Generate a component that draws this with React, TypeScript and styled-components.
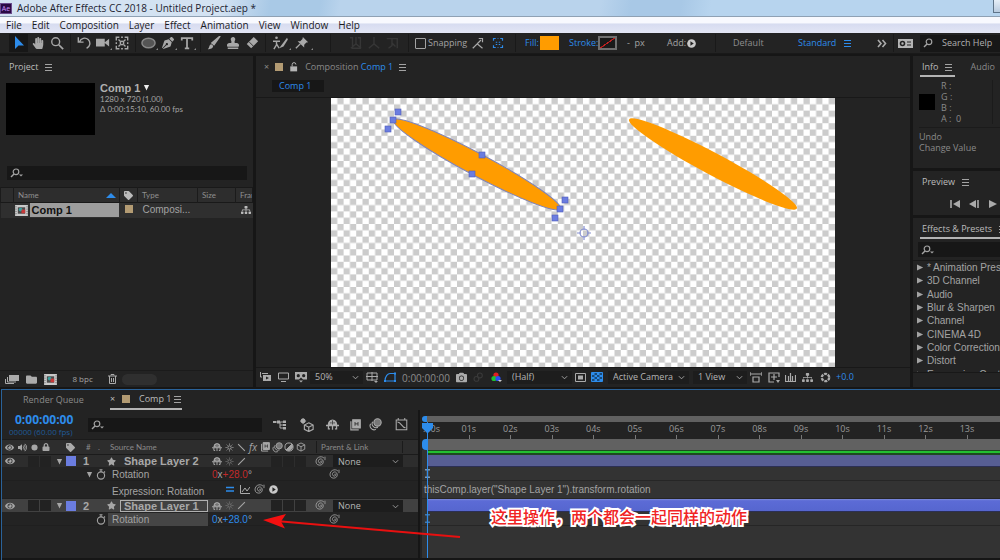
import React from "react";
import styled, { createGlobalStyle, css } from "styled-components";
import {
  FaCamera,
  FaEye,
  FaFolder,
  FaHandPaper,
  FaLock,
  FaPenNib,
  FaSitemap,
  FaStamp,
  FaStar,
  FaTag,
  FaVolumeUp,
} from "react-icons/fa";

const ui = `"Open Sans", "Noto Sans", sans-serif`;
const fine = `Lato, "Open Sans", sans-serif`;
const sans = `"Liberation Sans", Arial, sans-serif`;
const BLUE = "#2d8ceb";
const ORANGE = "#ff9c00";
const TAN = "#b39b73";
const PERI = "#6b7de0";

const Global = createGlobalStyle`
  * { box-sizing: border-box; }
  body { margin: 0; background: #161616; font: 9px/12px ${ui}; color: #a3a3a3; overflow: hidden; }
  button, select, input { font: inherit; color: inherit; border: 0; margin: 0; padding: 0; background: none; border-radius: 0; outline: 0; }
  button { display: inline-flex; align-items: center; justify-content: center; }
  svg { display: block; flex: none; }
  h2, p, ul { margin: 0; padding: 0; font: inherit; list-style: none; }
  a { color: inherit; text-decoration: none; }
`;

const App_ = styled.main`
  display: flex;
  flex-direction: column;
  min-height: 100vh;
`;

/* ---------- window chrome ---------- */
const TitleBar = styled.header`
  display: flex;
  align-items: center;
  gap: 5px;
  height: 17px;
  color: #1c2230;
  font-size: 10px;
  border-bottom: 1px solid #8fa1b4;
  background: linear-gradient(100deg, #d3e2f2 0 22%, #a9c9e6 27% 32%, #b9d3ec 34% 60%, #a8c8e6 63% 68%, #b7d4ee 71%);
`;
const Logo = styled.span`
  display: grid;
  place-items: center;
  width: 12px;
  height: 11px;
  background: #2a0a44;
  border: 1px solid #6b4b8c;
  color: #cf96fd;
  font-size: 7px;
  line-height: 9px;
`;
const WindowControl = styled.button`
  align-self: flex-start;
  margin-left: auto;
  width: 7px;
  height: 13px;
  border: 1px solid #5f7489;
  border-width: 0 0 1px 1px;
  background: linear-gradient(#e6eef7, #b9cbdf);
`;
const MenuBar = styled.nav`
  display: flex;
  align-items: center;
  gap: 10px;
  height: 16px;
  padding: 0 6px;
  background: linear-gradient(#f8f9fe 0 35%, #d7dcf0 45%, #e3e6f5);
  color: #1b1b1f;
  font-size: 10px;
`;

/* ---------- toolbar ---------- */
const Toolbar = styled.div`
  display: flex;
  align-items: center;
  height: 21px;
  padding-left: 9px;
  background: #232323;
  border-bottom: 1px solid #191919;
`;
const Tool = styled.button<{ $w?: number; $active?: boolean; $dim?: boolean }>`
  position: relative;
  width: ${(p) => p.$w ?? 19}px;
  height: 18px;
  flex: none;
  color: ${(p) => (p.$active ? BLUE : p.$dim ? "#363636" : "#a8a8a8")};
  background: ${(p) => (p.$active ? "#171717" : "none")};
`;
const Corner = styled.i`
  position: absolute;
  right: 0;
  bottom: 2px;
  border: 1px solid #8a8a8a;
  border-top-color: transparent;
  border-left-color: transparent;
`;
const Sep = styled.span<{ $w?: number }>`
  flex: none;
  width: ${(p) => p.$w ?? 8}px;
  height: 18px;
  background: linear-gradient(#191919, #191919) center / 1px 100% no-repeat;
`;
const Check = styled.label`
  display: flex;
  align-items: center;
  gap: 2px;
  width: 50px;
  flex: none;
  input {
    appearance: none;
    flex: none;
    width: 11px;
    height: 11px;
    border: 1px solid #a3a3a3;
    border-radius: 1px;
  }
`;
const Label = styled.span<{ $w: number; $blue?: boolean }>`
  width: ${(p) => p.$w}px;
  flex: none;
  white-space: nowrap;
  color: ${(p) => (p.$blue ? BLUE : "inherit")};
`;
const TextButton = styled.button<{ $w: number; $blue?: boolean }>`
  width: ${(p) => p.$w}px;
  flex: none;
  justify-content: flex-start;
  white-space: nowrap;
  color: ${(p) => (p.$blue ? BLUE : "#8f8f8f")};
`;
const Swatch = styled.button<{ $none?: boolean }>`
  width: 19px;
  height: 14px;
  margin-right: 10px;
  flex: none;
  ${(p) =>
    p.$none
      ? css`
          border: 2px solid #707070;
          background: linear-gradient(145deg, #1a1a1a 46%, #c02020 47% 53%, #1a1a1a 54%);
        `
      : css`
          background: ${ORANGE};
        `}
`;
const Right = styled.div`
  display: flex;
  align-items: center;
  margin-left: auto;
`;
const HelpSearch = styled.label`
  display: flex;
  align-items: center;
  gap: 5px;
  width: 80px;
  height: 17px;
  padding-left: 3px;
  margin-left: 8px;
  background: #171717;
  input { width: 56px; }
  input::placeholder { color: #b0b0b0; opacity: 1; }
`;

/* ---------- panels ---------- */
const Workspace = styled.div`
  display: grid;
  grid-template-columns: 253px minmax(0, 1fr) 87px;
  gap: 3px;
  height: 333px;
  padding-top: 2px;
`;
const Panel = styled.section`
  display: flex;
  flex-direction: column;
  min-width: 0;
  overflow: hidden;
  background: #232323;
`;
const PanelTab = styled.h2<{ $line?: boolean }>`
  display: flex;
  align-items: center;
  flex: none;
  gap: 7px;
  height: 21px;
  padding: 3px 2px 0;
  margin-left: 7px;
  align-self: flex-start;
  white-space: nowrap;
  color: #bcbcbc;
  border-bottom: ${(p) => (p.$line ? "2px solid #b4b4b4" : "2px solid transparent")};
`;
const Summary = styled.div`
  display: flex;
  gap: 5px;
  padding: 6px 5px 0 6px;
  line-height: 10px;
`;
const Thumb = styled.div`
  width: 89px;
  height: 52px;
  background: #000;
`;
const CompTitle = styled.button`
  gap: 3px;
  height: 9px;
  font: bold 11px/10px ${sans};
  color: #b0b0b0;
`;
const Small = styled.p`
  font: 8px/10px ${fine};
`;
const SearchBox = styled.label<{ $h?: number }>`
  display: flex;
  align-items: center;
  height: ${(p) => p.$h ?? 14}px;
  padding-left: 3px;
  background: #171717;
  input { flex: 1; min-width: 0; }
`;
const ProjectTable = styled.table`
  width: 100%;
  margin-top: 7px;
  table-layout: fixed;
  border-collapse: collapse;
  font: 8px/12px ${fine};
  text-align: left;
  white-space: nowrap;
  th, td { padding: 0; height: 15px; font-weight: normal; overflow: hidden; }
  thead tr { background: #2d2d2d; border: 1px solid #191919; }
  th { border-left: 1px solid #1b1b1b; padding-left: 4px; color: #8f8f8f; }
  tbody tr { background: #2f2f2f; }
  td { padding-left: 5px; font-family: ${sans}; font-size: 10px; }
`;
const NameHead = styled.span`
  display: flex;
  align-items: center;
  justify-content: space-between;
  padding-right: 3px;
`;
const ItemName = styled.div`
  display: flex;
  align-items: center;
  gap: 2px;
  margin: 0 1px 0 -4px;
  color: #111;
  font: bold 11px/14px ${sans};
  b { flex: 1; padding-left: 2px; background: #9d9d9d; }
`;
const Chip = styled.i<{ $c: string; $s?: number }>`
  display: inline-block;
  flex: none;
  width: ${(p) => p.$s ?? 8}px;
  height: ${(p) => p.$s ?? 8}px;
  background: ${(p) => p.$c};
`;
const ProjectFooter = styled.footer`
  display: flex;
  align-items: center;
  height: 17px;
  margin-top: auto;
  padding-left: 2px;
  border-top: 1px solid #1b1b1b;
  font-size: 8px;
`;
const Pill = styled.span`
  width: 35px;
  height: 11px;
  margin-left: 3px;
  border-radius: 6px;
  background: #2f2f2f;
`;

/* ---------- composition viewer ---------- */
const ViewerTabs = styled.div`
  display: flex;
  align-items: center;
  gap: 6px;
  height: 21px;
  padding-left: 8px;
  color: #8a8a8a;
`;
const Crumb = styled.button`
  align-self: flex-start;
  justify-content: flex-start;
  width: 52px;
  height: 12px;
  margin: 3px 0 0 16px;
  padding-left: 7px;
  background: #171717;
  color: ${BLUE};
`;
const Stage = styled.div`
  display: flex;
  justify-content: center;
  margin-top: 5px;
  border: 1px solid #181818;
  border-width: 1px 0;
`;
const ViewerFooter = styled.footer`
  display: flex;
  align-items: center;
  height: 18px;
  color: #b0b0b0;
`;
const IconButton = styled.button<{ $w?: number; $c?: string }>`
  flex: none;
  width: ${(p) => p.$w ?? 18}px;
  height: 14px;
  color: ${(p) => p.$c ?? "#ababab"};
`;
const SelectWrap = styled.span<{ $w: number }>`
  display: inline-grid;
  flex: none;
  align-items: center;
  width: ${(p) => p.$w}px;
  height: 13px;
  background: #1d1d1d;
  > * { grid-area: 1 / 1; }
  > svg { justify-self: end; margin-right: 4px; pointer-events: none; }
  select { appearance: none; width: 100%; height: 13px; padding-left: 5px; color: #b5b5b5; }
`;
const Timecode = styled.button`
  flex: none;
  width: 54px;
  color: #8c8c8c;
  font: 10px/12px ${ui};
  padding-top: 2px;
`;

/* ---------- right column ---------- */
const SidePanels = styled.div`
  display: flex;
  flex-direction: column;
  gap: 3px;
  min-width: 0;
`;
const TabRow = styled.div`
  display: flex;
  gap: 15px;
  white-space: nowrap;
  color: #8a8a8a;
  align-items: center;
`;
const InfoBody = styled.div`
  display: flex;
  align-items: center;
  gap: 6px;
  height: 51px;
  margin: 0 0 3px 6px;
  border-bottom: 1px solid #1b1b1b;
  dl { display: grid; grid-template-columns: 15px 20px; margin: 0 7px 0 0; line-height: 11px; color: #8a8a8a; flex: 1; border-right: 1px solid #1b1b1b; }
  dd { margin: 0; }
`;
const Log = styled.p`
  padding-left: 6px;
  line-height: 11px;
  color: #8a8a8a;
`;
const Transport = styled.div`
  display: flex;
  align-items: center;
  gap: 2px;
  padding-left: 34px;
  height: 23px;
`;
const EffectsClip = styled.div`
  height: 113px;
  margin-top: 3px;
  overflow: hidden;
  border: 1px solid #181818;
  border-width: 1px 0;
`;
const EffectsList = styled.ul`
  display: grid;
  grid-template-rows: repeat(9, 1fr);
  height: 120px;
  padding-left: 4px;
  font: 10px/13px ${sans};
  white-space: nowrap;
  li { display: flex; align-items: center; gap: 3px; }
`;

/* ---------- timeline ---------- */
const Timeline = styled.section`
  position: relative;
  flex: 1;
  display: flex;
  flex-direction: column;
  margin: 2px 0 0 1px;
  border: 1px solid #2a6299;
  border-width: 1px 0 0 1px;
  background: #232323;
`;
const TimelineTabs = styled.div`
  display: flex;
  align-items: center;
  height: 20px;
  padding-left: 21px;
  color: #8a8a8a;
`;
const ActiveTab = styled.span`
  display: flex;
  align-items: center;
  height: 19px;
  width: 72px;
  border-bottom: 2px solid #b4b4b4;
  color: #bcbcbc;
`;
const Split = styled.div`
  flex: 1;
  display: grid;
  grid-template-columns: 418px minmax(0, 1fr);
  border-bottom: 2px solid #161616;
`;
const Outline = styled.div`
  display: flex;
  flex-direction: column;
  border-right: 2px solid #161616;
`;
const Controls = styled.div`
  display: flex;
  align-items: center;
  height: 29px;
  padding-left: 7px;
`;
const CurrentTime = styled.div`
  width: 79px;
  flex: none;
  white-space: nowrap;
  button { display: block; margin-left: 6px; color: ${BLUE}; font: bold 12px/14px ${ui}; }
  p { color: #1f5a96; font-size: 8px; line-height: 10px; }
`;
const OutlineHead = styled.div`
  display: grid;
  align-items: center;
  grid-template-columns: 26px 12px 12px 14px 16px 14px 14px 101px repeat(8, 12px) 26px 70px 1fr;
  height: 16px;
  border: 1px solid #1b1b1b;
  border-width: 1px 0;
  background: #2d2d2d;
  font: 8px/12px ${fine};
  color: #8a8a8a;
`;
const Center = styled.span<{ $c?: string }>`
  display: grid;
  place-items: center;
  color: ${(p) => p.$c ?? "#a6a6a6"};
`;
const Pair = styled.span`
  display: flex;
  align-items: center;
  gap: 4px;
  padding-left: 3px;
  color: #a6a6a6;
`;
const LayerRow = styled.div<{ $on?: boolean }>`
  display: grid;
  align-items: center;
  grid-template-columns: 26px 12px 12px 14px 14px 22px 18px 91px repeat(8, 12px) 26px 70px 1fr;
  height: ${(p) => (p.$on ? 13 : 12)}px;
  background: ${(p) => (p.$on ? "#414141" : "#2d2d2d")};
  font: bold 11px/12px ${sans};
  color: #a8a8a8;
`;
const Well = styled.i`
  width: 11px;
  height: 11px;
  background: #222;
`;
const LayerName = styled.span<{ $on?: boolean }>`
  height: 12px;
  margin-right: 3px;
  padding-left: 3px;
  white-space: nowrap;
  line-height: ${(p) => (p.$on ? 10 : 12)}px;
  border: solid ${(p) => (p.$on ? "#b0b0b0" : "transparent")};
  border-width: ${(p) => (p.$on ? "1px" : "0 0 0 1px")};
`;
const PropRow = styled.div<{ $h?: number }>`
  display: grid;
  grid-template-columns: 80px 26px 104px 1fr;
  align-items: center;
  height: ${(p) => p.$h ?? 14}px;
  padding-top: 1px;
  font: 10px/13px ${sans};
  color: #a3a3a3;
  border-bottom: 1px solid #1f1f1f;
`;
const PropIcons = styled.span`
  display: flex;
  align-items: center;
  justify-content: flex-end;
  gap: 3px;
  grid-column: 1 / 3;
  padding-right: 2px;
`;
const PropName = styled.span<{ $on?: boolean }>`
  padding-left: 4px;
  margin-right: 4px;
  background: ${(p) => (p.$on ? "#454545" : "none")};
  white-space: nowrap;
`;
const Value = styled.span<{ $c: string }>`
  display: flex;
  align-items: center;
  button { color: ${(p) => p.$c}; }
  svg { margin-left: 77px; }
`;
const ExprTools = styled.span`
  display: flex;
  align-items: flex-start;
  gap: 2px;
  padding: 0 0 5px 12px;
`;

const Graph = styled.div`
  display: flex;
  flex-direction: column;
  margin-left: 2px;
  background: #333;
`;
const Bar = styled.div<{ $h: number }>`
  height: ${(p) => p.$h}px;
  padding-left: 5px;
  background: linear-gradient(#616161, #616161) 5px 0 no-repeat #232323;
  &::before {
    content: "";
    display: block;
    width: 5px;
    height: 100%;
    margin-left: -5px;
    border-radius: 4px 0 0 4px;
    background: ${BLUE};
  }
`;
const Ruler = styled.ol`
  display: flex;
  height: 17px;
  margin: 0;
  padding: 0 0 0 5px;
  list-style: none;
  background: #232323;
  color: #9a9a9a;
  li { flex: 1 1 0; min-width: 0; white-space: nowrap; line-height: 13px; background: linear-gradient(#777, #777) 0 100% / 1px 4px no-repeat; }
  li span { margin-left: -7px; }
  li:first-child span { margin-left: -4px; }
  li:last-child { flex-grow: 0.8; }
`;
const Cache = styled.div`
  height: 5px;
  margin-left: 5px;
  border: solid #1d4a1f;
  border-width: 1px 0 2px;
  background: #22c030;
`;
const Clip = styled.div<{ $on?: boolean }>`
  height: ${(p) => (p.$on ? 13 : 12)}px;
  margin-left: 5px;
  background: ${(p) => (p.$on ? "linear-gradient(#7f8ddc, #5c6bd6 15%, #5666cf)" : "#575e93")};
  border-bottom: 1px solid #2b2f55;
`;
const Track = styled.div<{ $h?: number }>`
  display: flex;
  align-items: center;
  height: ${(p) => p.$h ?? 14}px;
  padding-left: 2px;
  border-bottom: 1px solid #262626;
  font: 10px/14px ${sans};
  color: #a3a3a3;
  white-space: nowrap;
`;
const Playhead = styled.div`
  position: absolute;
  left: 420px;
  top: 32px;
  bottom: 2px;
  width: 11px;
  background: linear-gradient(${BLUE}, ${BLUE}) 5px 0 / 1px 100% no-repeat;
`;
const Note = styled.p`
  position: absolute;
  left: 489px;
  top: 115px;
  font: 500 16px/22px "Noto Sans CJK SC", sans-serif;
  color: #f02424;
  -webkit-text-stroke: 4px #fff;
  paint-order: stroke fill;
  white-space: nowrap;
`;
const Arrow = styled.svg`
  position: absolute;
  left: 260px;
  top: 119px;
`;

/* ---------- drawings ---------- */
type G = { w?: number; h?: number; box?: string; children: React.ReactNode };
const Glyph = ({ w = 14, h = 14, box = "0 0 16 16", children }: G) => (
  <svg width={w} height={h} viewBox={box} fill="none" stroke="currentColor" strokeWidth="1.6" aria-hidden="true">
    {children}
  </svg>
);
const Chevron = () => (
  <Glyph w={7} h={7} box="0 0 8 8"><path d="M1 2.5 4 5.5 7 2.5" strokeWidth="1" /></Glyph>
);
const Menu = ({ c = "#a3a3a3" }: { c?: string }) => (
  <Glyph w={8} h={8} box="0 0 8 8"><path d="M0 1.5h7M0 4.5h7M0 7.5h7" strokeWidth="1" stroke={c} /></Glyph>
);
const Mag = ({ caret = true }: { caret?: boolean }) => (
  <Glyph w={14} h={10} box="0 0 14 10">
    <circle cx="6" cy="3.8" r="2.8" strokeWidth="1.2" />
    <path d="M4 6 1 9" strokeWidth="1.4" />
    {caret && <path d="M9 6.5h4l-2 2z" fill="currentColor" stroke="none" />}
  </Glyph>
);
const Tri = ({ down = false, c = "currentColor" }: { down?: boolean; c?: string }) => (
  <Glyph w={7} h={7} box="0 0 8 8">
    <path d={down ? "M1 1h6L4 7.5z" : "M0 .5v7l7-3.500z"} fill={c} stroke="none" />
  </Glyph>
);
const Whip = () => (
  <Glyph w={11} h={11}>
    <path d="M8 8c0-1.500 2.500-1 2 1s-4.500 2-5-.8S7 3.500 9.500 4.500s3.500 4.500 1.500 7-7 2.500-8.800-.5S2 3.500 5 2s6-1 8 1M14.500 1v5" strokeWidth="1.200" />
  </Glyph>
);
const Stopwatch = () => (
  <Glyph w={10} h={11} box="0 0 10 11">
    <circle cx="5" cy="6.5" r="3.6" strokeWidth="1.1" />
    <path d="M3.5.7h3M5 1v2M8 2.5l1 1" strokeWidth="1.1" />
  </Glyph>
);
const CubeIcon = () => (
  <Glyph w={10} h={10}><path d="M8 1.5 14 4.500v7L8 14.500 2 11.500v-7zM2 4.500l6 3 6-3M8 7.500v7" strokeWidth="1.4" /></Glyph>
);
const MotionBlur = ({ s = 11 }: { s?: number }) => (
  <Glyph w={s} h={s}>
    <circle cx="10.5" cy="5.5" r="4.5" fill="#777" strokeWidth="1.3" />
    <path d="M4.500 4.500a5 5 0 0 0 6.500 7M2 7a5 5 0 0 0 6.500 7" strokeWidth="1.3" />
  </Glyph>
);
const FrameBlend = ({ s = 10 }: { s?: number }) => (
  <Glyph w={s} h={s}>
    <path d="M5 1h10v11H5z" fill="currentColor" />
    <path d="M2.500 3v11.500H13" /><path d="M8 4v5M12 4v5M8 6.500h4" stroke="#333" strokeWidth="1.2" />
  </Glyph>
);
const Shy = ({ s = 10 }: { s?: number }) => (
  <Glyph w={s} h={s}>
    <path d="M3 8a5 5.500 0 0 1 10 0z" fill="currentColor" />
    <path d="M0 9.200h16M8 9v5.500M3 9v4.500h2M13 9v4.500h-2" />
    <path d="M8 3v5M5 6h2M9 6h2" stroke="#333" strokeWidth="1" />
  </Glyph>
);
const Sun = () => (
  <Glyph w={9} h={9}><circle cx="8" cy="8" r="3" /><path d="M8 1v2M8 13v2M1 8h2M13 8h2M3 3l1.500 1.500M11.500 11.500 13 13M13 3l-1.500 1.500M3 13l1.500-1.500" /></Glyph>
);
const Slash = ({ back = false }: { back?: boolean }) => (
  <Glyph w={9} h={9}><path d={back ? "M2 2 14 14" : "M2 14 14 2"} strokeWidth="2" /></Glyph>
);
const CompIcon = () => (
  <Glyph w={13} h={11} box="0 0 14 12">
    <path d="M0 0h14v12H0z" fill="#c9c9c9" stroke="none" />
    <path d="M3 2.500h8v7H3z" fill="#4b4b4b" stroke="none" />
    <circle cx="6" cy="5" r="2" fill="#3aa0a0" stroke="none" />
    <path d="M7 5h4v4H7z" fill="#c83a3a" stroke="none" />
    <path d="M1 1.500v10M13 1.500v10" stroke="#555" strokeWidth="1" strokeDasharray="1 1.5" />
  </Glyph>
);
const PlayDisc = () => (
  <Glyph w={9} h={9} box="0 0 10 10">
    <circle cx="5" cy="5" r="4.8" fill="#c8c8c8" stroke="none" />
    <path d="M3.800 2.500v5l3.700-2.500z" fill="#222" stroke="none" />
  </Glyph>
);
const Flow = () => (
  <Glyph w={14} h={12} box="0 0 14 12">
    <path d="M1 3h10M7 3v6h4M7 6h4" strokeWidth="1" />
    <path d="M0 2h3v2H0zM4 1.500h3v3H4zM10 1.500h3v2.500h-3zM10 5h3v2h-3zM10 8h3v2.500h-3z" fill="currentColor" stroke="none" />
  </Glyph>
);
const Beam = ({ c }: { c: string }) => (
  <Glyph w={7} h={9} box="0 0 7 9"><path d="M1 .7h5M1 8.300h5M3.500 1v7" stroke={c} strokeWidth="1.4" /></Glyph>
);

const handles = [[67, 14], [62, 22], [57, 31], [151, 57], [141, 76], [234, 102], [229, 111], [224, 120]];
const CompCanvas = () => (
  <svg width="504" height="269" viewBox="0 0 504 269" role="img" aria-label="Composition view">
    <defs>
      <pattern id="checker" width="12.6" height="12.6" patternUnits="userSpaceOnUse">
        <path d="M0 0h12.600v12.600H0z" fill="#fff" />
        <path d="M6.300 0h6.300v6.300H6.300zM0 6.300h6.300v6.300H0z" fill="#ccc" />
      </pattern>
    </defs>
    <rect width="504" height="269" fill="url(#checker)" />
    <ellipse cx="146" cy="66.5" rx="94.5" ry="11" transform="rotate(28 146 66.5)" fill={ORANGE} stroke="#8084b8" />
    <ellipse cx="382" cy="66" rx="95" ry="11" transform="rotate(28 382 66)" fill={ORANGE} />
    {handles.map(([x, y]) => (
      <rect key={`${x}-${y}`} x={x - 3} y={y - 3} width="6" height="6" fill={PERI} stroke="#4f5db8" strokeWidth=".6" />
    ))}
    <g fill="none" stroke="#8690d0" strokeWidth="1.2">
      <circle cx="253" cy="135" r="4" />
      <path d="M253 128v4M253 138v4M246 135h4M256 135h4" />
    </g>
  </svg>
);

/* ---------- pieces ---------- */
const Select = ({ w, label, value }: { w: number; label: string; value: string }) => (
  <SelectWrap $w={w}>
    <select aria-label={label} defaultValue={value}><option>{value}</option></select>
    <Chevron />
  </SelectWrap>
);
const LayerSelect = styled.span`
  font: 9px/12px ${ui};
  height: 12px;
  overflow: hidden;
`;
const ViewLink = styled.a`
  color: ${BLUE};
`;
const ViewGap = styled.span`
  width: 2px;
`;
const ProjectSearch = styled(SearchBox)`
  margin: 31px 6px 0 7px;
`;
const EffectSearch = styled(SearchBox)`
  margin: 3px 0 0 5px;
`;
const TimelineSearch = styled(SearchBox)`
  width: 174px;
  flex: none;
  margin-right: 3px;
`;
const InfoPanel = styled(Panel)`
  height: 112px;
`;
const PreviewPanel = styled(Panel)`
  height: 44px;
`;
const EffectsPanel = styled(Panel)`
  flex: 1;
`;
const TabText = styled.span`
  flex: 1;
  padding-left: 9px;
  white-space: nowrap;
`;
const FxText = styled.i`
  font: italic 10px/10px ${ui};
`;
const HeadCell = styled.span`
  grid-column: 17 / 19;
  padding-left: 4px;
  margin-left: 9px;
  border: 1px solid #1b1b1b;
  border-width: 0 1px;
`;
const TopGap = styled.div`
  height: 6px;
  background: #232323;
`;

const Layer = ({ n, name, on }: { n: number; name: string; on?: boolean }) => (
  <LayerRow $on={on}>
    <Pair><FaEye size={10} /></Pair>
    <Well /><Well />
    <Center><Tri down /></Center>
    <Chip $c={PERI} $s={10} />
    <span>&nbsp;{n}</span>
    <Center><FaStar size={9} /></Center>
    <LayerName $on={on}>{name}</LayerName>
    <Center><Shy /></Center>
    <Center $c="#777"><Sun /></Center>
    <Center><Slash /></Center>
    <span /><span />
    <Well /><Well /><Well />
    <Center><Whip /></Center>
    <LayerSelect><Select w={70} label={`${name} parent`} value="None" /></LayerSelect>
  </LayerRow>
);

const effects = ["* Animation Presets", "3D Channel", "Audio", "Blur & Sharpen", "Channel", "CINEMA 4D", "Color Correction", "Distort", "Expression Controls"];
const seconds = Array.from({ length: 14 }, (_, i) => (i ? String(i).padStart(2, "0") + "s" : ":00s"));

export default function App() {
  return (
    <App_>
      <Global />
      <TitleBar>
        <Logo>Ae</Logo>
        <span>Adobe After Effects CC 2018 - Untitled Project.aep *</span>
        <WindowControl aria-label="Minimize" />
      </TitleBar>
      <MenuBar>
        {["File", "Edit", "Composition", "Layer", "Effect", "Animation", "View", "Window", "Help"].map((m) => (
          <button key={m}>{m}</button>
        ))}
      </MenuBar>

      <Toolbar>
        <Tool $active aria-label="Selection"><Glyph w={10} h={14} box="0 0 10 14"><path d="M1 0v13l3.500-3.500H10z" fill="currentColor" stroke="none" /></Glyph></Tool>
        <Tool aria-label="Hand"><FaHandPaper size={12} /></Tool>
        <Tool aria-label="Zoom"><Glyph><circle cx="6.5" cy="6.5" r="4.5" /><path d="m10 10 5 5" strokeWidth="2" /></Glyph></Tool>
        <Sep />
        <Tool aria-label="Rotation"><Glyph><path d="M3 6.500A6 6 0 1 1 11 14M1.500 1.500v5.500h6" /></Glyph></Tool>
        <Tool aria-label="Camera"><Glyph><path d="M0 3h10v9H0zM10 7l5-4v9l-5-4z" fill="currentColor" stroke="none" /></Glyph><Corner /></Tool>
        <Tool aria-label="Pan behind"><Glyph><path d="M1.500 5V1.500H5M11 1.500h3.500V5M14.500 11v3.500H11M5 14.500H1.500V11M7 1.500h2M7 14.500h2M1.500 7v2M14.500 7v2" /><circle cx="8" cy="8" r="2" /><path d="m4 4 2 2M12 4l-2 2M4 12l2-2M12 12l-2-2" /></Glyph></Tool>
        <Sep />
        <Tool aria-label="Ellipse"><Glyph w={15} h={12} box="0 0 16 12"><ellipse cx="8" cy="6" rx="7" ry="5" fill="#555" stroke="#888" /></Glyph><Corner /></Tool>
        <Tool aria-label="Pen"><FaPenNib size={12} /><Corner /></Tool>
        <Tool aria-label="Type"><Glyph><path d="M2 5V2.500h12V5M8 2.500V14M5.500 14.200h5" strokeWidth="2" /></Glyph><Corner /></Tool>
        <Sep />
        <Tool aria-label="Brush"><Glyph><path d="M15 0 8 10 5.500 8z" fill="currentColor" /><path d="M5 9.500 7 11c0 3-3 4-6 4 2-1 1-5 4-5.500z" fill="currentColor" stroke="none" /></Glyph></Tool>
        <Tool aria-label="Clone stamp"><FaStamp size={12} /></Tool>
        <Tool aria-label="Eraser"><Glyph><path d="m10 1 5 5-8 8-5-5z" fill="currentColor" stroke="none" /><path d="m5 7 5 5" stroke="#232323" strokeWidth="1" /></Glyph></Tool>
        <Sep />
        <Tool $w={22} aria-label="Roto brush"><Glyph w={16} h={14} box="0 0 18 16"><circle cx="5" cy="2" r="1.5" fill="currentColor" stroke="none" /><path d="M1 6h8M5 5v5L2 15M5 9l3 5" /><path d="m17 2-6 8-3 4 5-2 5-8z" fill="currentColor" stroke="none" /></Glyph><Corner /></Tool>
        <Tool $w={22} aria-label="Puppet pin"><Glyph><path d="m9 1 6 6-2 .5-2.500 2.500v3L3 6h3L8.500 3.500z" fill="currentColor" stroke="none" /><path d="m6 9-5 5" /></Glyph><Corner /></Tool>
        <Sep $w={34} />
        <Tool $w={18} $dim aria-label="Local axis"><Glyph><path d="M8 1v8l-6 5M8 9l6 5M1 2h3v12h9V2h-3" /></Glyph></Tool>
        <Tool $w={18} $dim aria-label="World axis"><Glyph><path d="M8 1v8l-6 5M8 9l6 5" /></Glyph></Tool>
        <Tool $w={18} $dim aria-label="View axis"><Glyph><path d="M2 3h12v11M8 3v8l-4 3M8 8l4 4" /></Glyph></Tool>
        <Sep $w={14} />
        <Check><input type="checkbox" />Snapping</Check>
        <Tool $w={25} aria-label="Snap along edges"><Glyph w={12} h={12}><path d="M1 15 7 9l7 6M7 9l5-5M9 2h5v5" /></Glyph></Tool>
        <Tool $w={16} aria-label="Snap to features"><Glyph w={12} h={12}><path d="M2 5V2h3M11 2h3v3M14 11v3h-3M5 14H2v-3" stroke={BLUE} /><path d="M5 7h2M9 7h2M5 10h2M9 10h2M7.500 2h1M7.500 14h1" stroke={BLUE} /></Glyph></Tool>
        <Sep $w={19} />
        <Label $w={15} $blue>Fill:</Label>
        <Swatch aria-label="Fill colour" />
        <Label $w={29} $blue>Stroke:</Label>
        <Swatch $none aria-label="Stroke colour" />
        <Label $w={40}>-&nbsp; px</Label>
        <Label $w={19}>Add:</Label>
        <IconButton $w={11} aria-label="Add"><PlayDisc /></IconButton>
        <Sep $w={36} />
        <TextButton $w={65}>Default</TextButton>
        <TextButton $w={45} $blue>Standard</TextButton>
        <IconButton $w={10} aria-label="Workspace menu"><Menu c={BLUE} /></IconButton>
        <Right>
          <IconButton $w={14} aria-label="More workspaces"><Glyph w={10} h={9} box="0 0 10 9"><path d="m1 1 3 3.500-3 3.500M5.500 1l3 3.500-3 3.500" /></Glyph></IconButton>
          <Sep $w={9} />
          <IconButton $w={14} aria-label="Sync settings"><Glyph w={15} h={9} box="0 0 15 9"><path d="M0 0h15v9H0z" fill="#b5b5b5" stroke="none" /><circle cx="4.5" cy="4.5" r="2" stroke="#222" /><path d="M9 3h4M9 6h4" stroke="#222" strokeWidth="1.2" /></Glyph></IconButton>
          <HelpSearch><Mag caret={false} /><input placeholder="Search Help" aria-label="Search help" /></HelpSearch>
        </Right>
      </Toolbar>

      <Workspace>
        <Panel>
          <PanelTab>Project <Menu /></PanelTab>
          <Summary>
            <Thumb />
            <div>
              <CompTitle>Comp 1 <Tri down c="#eee" /></CompTitle>
              <Small>1280 x 720 (1.00)</Small>
              <Small>Δ 0:00:15:10, 60.00 fps</Small>
            </div>
          </Summary>
          <ProjectSearch><Mag /><input aria-label="Search project" /></ProjectSearch>
          <ProjectTable>
            <colgroup><col width="13" /><col width="106" /><col width="18" /><col width="60" /><col width="38" /><col /></colgroup>
            <thead>
              <tr>
                <th />
                <th><NameHead>Name <Glyph w={10} h={5} box="0 0 10 5"><path d="M5 0 10 5H0z" fill={BLUE} stroke="none" /></Glyph></NameHead></th>
                <th><FaTag size={9} color="#bbb" /></th>
                <th>Type</th><th>Size</th><th>Frame Rate</th>
              </tr>
            </thead>
            <tbody>
              <tr>
                <td />
                <td><ItemName><CompIcon /><b>Comp 1</b></ItemName></td>
                <td><Chip $c={TAN} /></td>
                <td>Composi...</td><td /><td><FaSitemap size={10} color="#bbb" /></td>
              </tr>
            </tbody>
          </ProjectTable>
          <ProjectFooter>
            <IconButton $w={19} aria-label="Interpret footage"><Glyph w={14} h={9} box="0 0 14 9"><path d="M4 0h10v6H4z" fill="currentColor" stroke="none" /><path d="M2.500 2v5H11M.5 4v4.500H9" strokeWidth="1" /></Glyph></IconButton>
            <IconButton $w={20} aria-label="New folder"><FaFolder size={11} /></IconButton>
            <IconButton $w={19} aria-label="New composition"><CompIcon /></IconButton>
            <Label $w={45}>&nbsp;&nbsp;&nbsp;&nbsp;&nbsp; 8 bpc</Label>
            <IconButton $w={14} aria-label="Delete"><Glyph w={9} h={10} box="0 0 9 10"><path d="M0 2h9M3 1.500V.5h3v1M1.500 2v7.500h6V2M3.500 4v4M5.500 4v4" strokeWidth="1" /></Glyph></IconButton>
            <Pill />
          </ProjectFooter>
        </Panel>

        <Panel>
          <ViewerTabs>
            <span>×</span><Chip $c={TAN} />
            <Glyph w={10} h={10}><path d="M2 7h11v8H2z" fill="#b5b5b5" stroke="none" /><path d="M5 7V4a3 3 0 0 1 6 0" stroke="#b5b5b5" /></Glyph>
            <span>Composition <ViewLink href="#comp">Comp 1</ViewLink></span><Menu />
          </ViewerTabs>
          <Crumb>Comp 1</Crumb>
          <Stage><CompCanvas /></Stage>
          <ViewerFooter>
            <IconButton aria-label="Always preview"><Glyph w={11} h={10} box="0 0 11 10"><path d="M3 3h8v6H3z" fill="currentColor" stroke="none" /><path d="M.5 0v5H2M2 1.500h6" strokeWidth="1" /><path d="m6 4.500 3 1.500-3 1.500z" fill="#222" stroke="none" /></Glyph></IconButton>
            <IconButton aria-label="Primary viewer"><Glyph w={11} h={10} box="0 0 11 10"><path d="M.5 1h10v6H.5zM3 9.500h5" strokeWidth="1" /></Glyph></IconButton>
            <IconButton aria-label="Immersive view"><Glyph w={12} h={11} box="0 0 12 11"><path d="M0 0h12v7.500H8L6 5.500l-2 2H0z" fill="currentColor" stroke="none" /><circle cx="3.3" cy="3.7" r="1.6" fill="#232323" stroke="none" /><circle cx="8.7" cy="3.7" r="1.6" fill="#232323" stroke="none" /><path d="M4 8.500h4L6 10.500z" fill="currentColor" stroke="none" /></Glyph></IconButton>
            <Select w={53} label="Magnification" value="50%" />
            <IconButton aria-label="Grid options"><Glyph w={12} h={11} box="0 0 12 11"><path d="M1 1h10v7H1zM6 0v9M0 4.500h12" strokeWidth="1" /><path d="M8 9h4l-2 2z" fill="currentColor" stroke="none" /></Glyph></IconButton>
            <IconButton $c={BLUE} aria-label="Mask visibility"><Glyph w={12} h={10} box="0 0 12 10"><path d="M1 9C1 4 4 1.500 6 1.500h5V9z" strokeWidth="1.2" /><path d="M0 8h2v2H0zM10 8h2v2h-2zM10 .5h2v2h-2z" fill="currentColor" stroke="none" /></Glyph></IconButton>
            <Timecode>0:00:00:00</Timecode>
            <IconButton $w={17} aria-label="Snapshot"><FaCamera size={11} /></IconButton>
            <IconButton $w={17} $c="#3a3a3a" aria-label="Show snapshot"><Glyph w={11} h={11}><circle cx="10" cy="5" r="3.5" /><circle cx="5" cy="10" r="3.5" /></Glyph></IconButton>
            <IconButton aria-label="Channels"><Glyph w={11} h={10} box="0 0 11 10"><g stroke="none"><circle cx="5" cy="3" r="2.6" fill="#e02020" /><circle cx="3" cy="6.5" r="2.6" fill="#20c030" /><circle cx="7" cy="6.5" r="2.6" fill="#2a50f0" /><path d="M7 8h4L9 10z" fill="#ccc" /></g></Glyph></IconButton>
            <ViewGap />
            <Select w={65} label="Resolution" value="(Half)" />
            <IconButton $w={16} aria-label="Region of interest"><Glyph w={11} h={9} box="0 0 11 9"><path d="M.5.5h10v8H.5z" strokeWidth="1" /><path d="M3 2.500h5v4H3z" fill="currentColor" stroke="none" /></Glyph></IconButton>
            <IconButton $c={BLUE} aria-label="Transparency grid"><Glyph w={12} h={10} box="0 0 12 10"><path d="M.5.500h11v9H.5z" fill="#174a7c" strokeWidth="1" /><path d="M1 1h2.500v2H1zM6 1h2.500v2H6zM3.500 3H6v2H3.500zM8.500 3H11v2H8.500zM1 5h2.500v2H1zM6 5h2.500v2H6zM3.500 7H6v2H3.500zM8.500 7H11v2H8.500z" fill={BLUE} stroke="none" /></Glyph></IconButton>
            <ViewGap />
            <Select w={81} label="Camera" value="Active Camera" />
            <ViewGap />
            <ViewGap />
            <Select w={54} label="View layout" value="1 View" />
            <IconButton aria-label="Pixel aspect"><Glyph w={12} h={11} box="0 0 12 11"><path d="M0 0v4M12 0v4M0 2h12M3 5h6v5H3z" strokeWidth="1.2" /></Glyph></IconButton>
            <IconButton $w={17} aria-label="Fast previews"><Glyph w={12} h={11} box="0 0 12 11"><path d="M6 10H1V1h10v4" strokeWidth="1.2" /><path d="M6 2v6M3 5h6" strokeWidth="1.2" /><path d="M8 8h4l-2 3z" fill="currentColor" stroke="none" /></Glyph></IconButton>
            <IconButton $w={17} aria-label="Timeline"><Glyph w={11} h={11} box="0 0 11 11"><path d="M.5 3v6.500h10V3M3.500 4v5M5.500 1v8M7.500 4v5" strokeWidth="1.2" /></Glyph></IconButton>
            <IconButton $w={17} aria-label="Flowchart"><FaSitemap size={11} /></IconButton>
            <IconButton aria-label="Reset exposure"><Glyph w={11} h={11} box="0 0 12 12"><circle cx="6" cy="6" r="4" strokeWidth="2.6" strokeDasharray="3.2 1" /></Glyph></IconButton>
            <ViewGap />
            <TextButton $w={24} $blue>+0.0</TextButton>
          </ViewerFooter>
        </Panel>

        <SidePanels>
          <InfoPanel>
            <TabRow><PanelTab $line>Info <Menu /></PanelTab><span>Audio</span></TabRow>
            <InfoBody>
              <Chip $c="#000" $s={16} />
              <dl><dt>R :</dt><dd /><dt>G :</dt><dd /><dt>B :</dt><dd /><dt>A :</dt><dd>0</dd></dl>
            </InfoBody>
            <Log>Undo<br />Change Value</Log>
          </InfoPanel>
          <PreviewPanel>
            <PanelTab>Preview <Menu /></PanelTab>
            <Transport>
              <IconButton $w={16} aria-label="First frame"><Glyph w={10} h={8} box="0 0 10 8"><path d="M1 0v8" /><path d="M10 0v8L3 4z" fill="currentColor" stroke="none" /></Glyph></IconButton>
              <IconButton $w={18} aria-label="Previous frame"><Glyph w={10} h={8} box="0 0 10 8"><path d="M9 0v8" /><path d="M7 0v8L0 4z" fill="currentColor" stroke="none" /></Glyph></IconButton>
              <IconButton $w={16} aria-label="Play"><Glyph w={8} h={8} box="0 0 8 8"><path d="M0 0v8l8-4z" fill="currentColor" stroke="none" /></Glyph></IconButton>
            </Transport>
          </PreviewPanel>
          <EffectsPanel>
            <PanelTab $line>Effects &amp; Presets <Menu /></PanelTab>
            <EffectSearch $h={15}><Mag /><input aria-label="Search effects" /></EffectSearch>
            <EffectsClip>
              <EffectsList>{effects.map((e) => <li key={e}><Tri />{e}</li>)}</EffectsList>
            </EffectsClip>
          </EffectsPanel>
        </SidePanels>
      </Workspace>

      <Timeline>
        <TimelineTabs>
          <Label $w={87}>Render Queue</Label>
          <ActiveTab><Label $w={12}>×</Label><Chip $c={TAN} /><TabText>Comp 1</TabText><Menu /></ActiveTab>
        </TimelineTabs>
        <Split>
          <Outline>
            <Controls>
              <CurrentTime><button>0:00:00:00</button><p>00000 (60.00 fps)</p></CurrentTime>
              <TimelineSearch><Mag /><input aria-label="Search layers" /></TimelineSearch>
              <IconButton $w={29} aria-label="Mini flowchart"><Flow /></IconButton>
              <IconButton $w={26} aria-label="Draft 3D"><Glyph w={14} h={14}><path d="M10 5.500 15 8v5l-5 2.500L5 13V8zM5 8l5 2.500L15 8M10 10.500V15" strokeWidth="1.3" /><circle cx="3.5" cy="3.5" r="2" fill="currentColor" /><path d="M3.500 0v7M0 3.500h7" strokeWidth="1" /></Glyph></IconButton>
              <IconButton $w={25} aria-label="Shy"><Shy s={13} /></IconButton>
              <IconButton $w={20} aria-label="Frame blending"><FrameBlend s={12} /></IconButton>
              <IconButton $w={20} aria-label="Motion blur"><MotionBlur s={13} /></IconButton>
              <IconButton $w={32} aria-label="Graph editor"><Glyph w={13} h={13}><path d="M1.500 2.500h13v12h-13zM3 5c5 0 5 7 10 7M4 0v2M12 0v2" strokeWidth="1.3" /></Glyph></IconButton>
            </Controls>
            <OutlineHead>
              <Pair><FaEye size={9} /><FaVolumeUp size={9} /></Pair>
              <Center><Glyph w={7} h={7} box="0 0 8 8"><circle cx="4" cy="4" r="3.5" fill="currentColor" stroke="none" /></Glyph></Center>
              <Center><FaLock size={8} /></Center>
              <span />
              <FaTag size={9} color="#aaa" />
              <span>&nbsp;&nbsp;#</span><span>&nbsp;.</span><span>Source Name</span>
              <Center><Shy /></Center><Center><Sun /></Center><Center><Slash back /></Center>
              <Center><FxText>fx</FxText></Center>
              <Center><FrameBlend /></Center><Center><MotionBlur /></Center>
              <Center><Glyph w={10} h={10}><circle cx="8" cy="8" r="6.5" /><path d="M3.500 12.500A6.500 6.500 0 0 0 12.500 3.500z" fill="currentColor" /></Glyph></Center>
              <Center><CubeIcon /></Center>
              <HeadCell>Parent &amp; Link</HeadCell>
            </OutlineHead>
            <Layer n={1} name="Shape Layer 2" />
            <PropRow>
              <PropIcons><Tri down /><Stopwatch /></PropIcons>
              <PropName>Rotation</PropName>
              <Value $c="#c22a2a"><button>0</button>x<button>+28.0</button>°<Whip /></Value>
            </PropRow>
            <PropRow $h={18}>
              <PropIcons />
              <PropName>Expression: Rotation</PropName>
              <ExprTools>
                <IconButton $w={13} $c={BLUE} aria-label="Enable expression"><Glyph w={9} h={8} box="0 0 9 8"><path d="M0 2.500h8M0 6h8" /></Glyph></IconButton>
                <IconButton $w={12} aria-label="Expression graph"><Glyph w={10} h={9} box="0 0 10 9"><path d="M.5 0v8.500H10M2 7l3-4 2 3 3-4" strokeWidth="1" /></Glyph></IconButton>
                <IconButton $w={12} aria-label="Pick whip"><Whip /></IconButton>
                <IconButton $w={12} aria-label="Language menu"><PlayDisc /></IconButton>
              </ExprTools>
            </PropRow>
            <Layer n={2} name="Shape Layer 1" on />
            <PropRow>
              <PropIcons><Stopwatch /></PropIcons>
              <PropName $on>Rotation</PropName>
              <Value $c={BLUE}><button>0</button>x<button>+28.0</button>°<Whip /></Value>
            </PropRow>
          </Outline>

          <Graph>
            <TopGap />
            <Bar $h={6} />
            <Ruler>{seconds.map((s) => <li key={s}><span>{s}</span></li>)}</Ruler>
            <Bar $h={11} />
            <Cache />
            <Clip />
            <Track><Beam c="#7b98b5" /></Track>
            <Track $h={18}>thisComp.layer("Shape Layer 1").transform.rotation</Track>
            <Clip $on />
            <Track><Beam c="#3f79b0" /></Track>
          </Graph>
        </Split>
        <Playhead>
          <Glyph w={11} h={12} box="0 0 11 12"><path d="M0 1h11v5L5.500 11.500 0 6z" fill={BLUE} stroke="none" /></Glyph>
        </Playhead>
        <Arrow width="202" height="34" viewBox="0 0 202 34" aria-hidden="true">
          <path d="M198 28 14 12" stroke="#e81010" strokeWidth="2" />
          <path d="M1 11 24 5l-5 7.500 4 7z" fill="#f41010" />
        </Arrow>
        <Note lang="zh">这里操作，两个都会一起同样的动作</Note>
      </Timeline>
    </App_>
  );
}
